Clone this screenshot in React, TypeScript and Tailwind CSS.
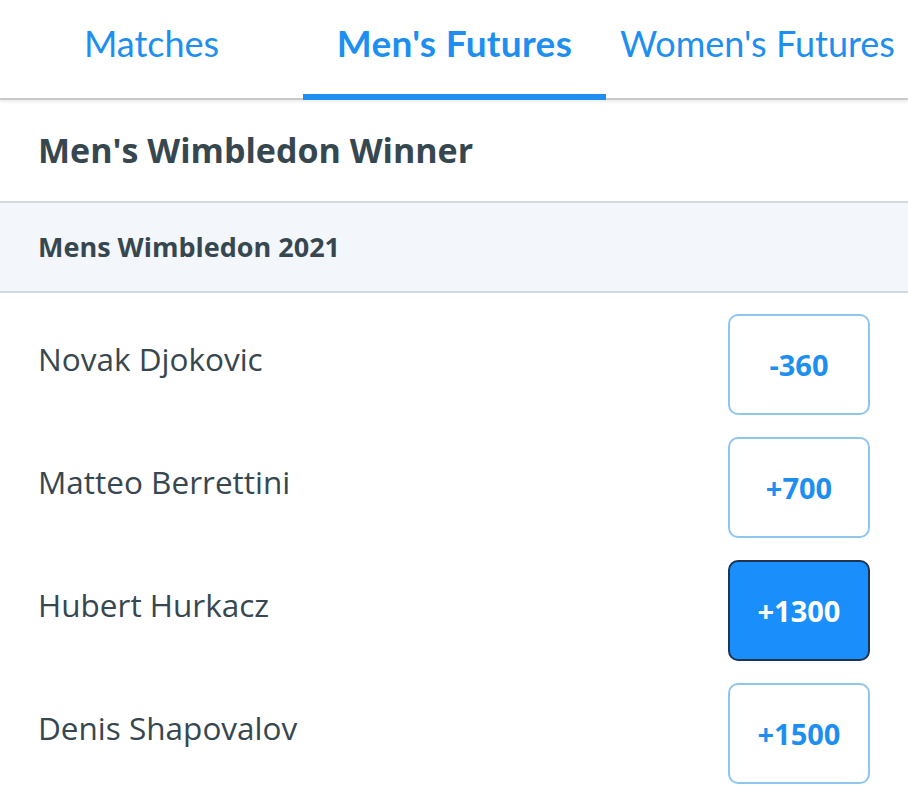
import { useState } from "react";

const runners = [
  { name: "Novak Djokovic", odds: "-360" },
  { name: "Matteo Berrettini", odds: "+700" },
  { name: "Hubert Hurkacz", odds: "+1300" },
  { name: "Denis Shapovalov", odds: "+1500" },
];

const tabs = ["Matches", "Men's Futures", "Women's Futures"];

export default function App() {
  const [tab, setTab] = useState(1);
  const [picked, setPicked] = useState("Hubert Hurkacz");

  return (
    <div className="w-[908px] h-[800px] overflow-hidden bg-white font-['Open_Sans','Lato',sans-serif] text-[#37474f]">
      <nav className="flex h-[100px] border-b-2 border-[#c9c9c9] shadow-[0_2px_3px_rgba(0,0,0,0.08)] font-['Lato',sans-serif]">
        {tabs.map((t, i) => (
          <button
            key={t}
            onClick={() => setTab(i)}
            className={`relative w-[303px] shrink-0 whitespace-nowrap pb-[12px] text-[#1e8ff0] ${i === tab ? "text-[37px] font-bold tracking-[0.3px]" : "text-[36px] font-normal"}`}
          >
            {t}
            {i === tab && <span className="absolute left-0 right-0 bottom-[-2px] h-[6px] bg-[#1e8ff0]" />}
          </button>
        ))}
      </nav>

      <div className="flex h-[103px] items-center px-[38px] border-b-2 border-[#d3dadf]">
        <h1 className="text-[34px] font-bold">Men's Wimbledon Winner</h1>
      </div>

      <div className="flex h-[90px] items-center px-[38px] bg-[#f3f6fa] border-b-2 border-[#d3dadf]">
        <h2 className="text-[27px] font-bold">Mens Wimbledon 2021</h2>
      </div>

      <div className="flex flex-col pt-[21px] gap-[22px]">
        {runners.map((r) => {
          const on = picked === r.name;
          return (
            <div key={r.name} className="flex items-start justify-between pl-[38px] pr-[38px]">
              <span className="pt-[21px] text-[31.5px]">{r.name}</span>
              <button
                onClick={() => setPicked(r.name)}
                className={`w-[142px] h-[101px] rounded-[10px] border-2 text-[29px] font-bold ${on ? "bg-[#1a8ffc] border-[#1c3552] text-white" : "bg-white border-[#8fc6f0] text-[#1e8ff0]"}`}
              >
                {r.odds}
              </button>
            </div>
          );
        })}
      </div>
    </div>
  );
}
